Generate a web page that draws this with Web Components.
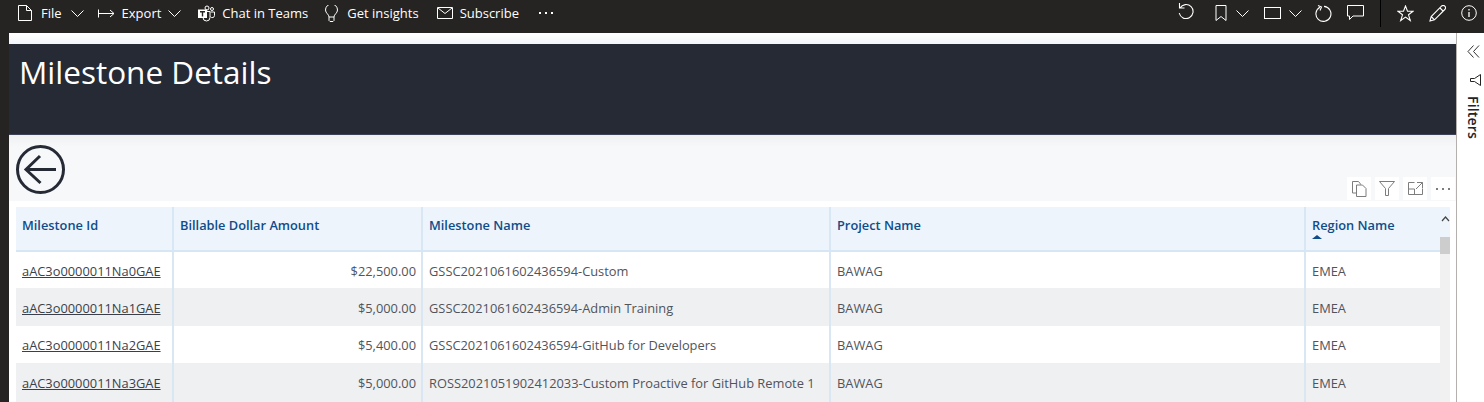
<!DOCTYPE html>
<html>
<head>
<meta charset="utf-8">
<style>
  html, body { margin: 0; height: 100%; overflow: hidden; background: #252423; }
  body { font-family: "Open Sans", "Liberation Sans", sans-serif; }
  report-app { height: 402px; }
</style>
</head>
<body>
<report-app>
  <tool-bar slot="bar"></tool-bar>
  <report-page slot="page"></report-page>
  <filter-pane slot="filters"></filter-pane>
</report-app>

<script>
const dots = (fill) => `<svg width="16" height="2" viewBox="0 0 16 2"><path d="M1 0h2v2H1zM7 0h2v2H7zM13 0h2v2h-2z" fill="${fill}"/></svg>`;

const ICONS = {
  file: '<svg width="14" height="16" viewBox="0 0 14 16"><path d="M.5.500h8l5 5v10H.500zM8.500.500v5h5" fill="none" stroke="#fff"/></svg>',
  exportArrow: '<svg width="17" height="11" viewBox="0 0 17 11"><path d="M.5 1.500v8M1 5.500h15M12 2l4 3.500L12 9" fill="none" stroke="#fff"/></svg>',
  teams: '<svg width="17" height="17" viewBox="0 0 17 17"><circle cx="9" cy="3" r="2" fill="none" stroke="#fff"/><circle cx="14" cy="4" r="1.500" fill="none" stroke="#fff"/><path d="M5 6.500h7v6a3.300 3.300 0 0 1-7 0z" fill="none" stroke="#fff"/><path d="M12.500 7h4v3.500a2.200 2.200 0 0 1-4 1.200" fill="none" stroke="#fff"/><rect x="0" y="4.500" width="9" height="8.500" fill="#fff"/><path d="M2 6.800h5M4.500 6.800v4.600" stroke="#252423" stroke-width="1.400" fill="none"/></svg>',
  bulb: '<svg width="13" height="17" viewBox="0 0 13 17"><path d="M4 12c0-2.700-3.500-3.800-3.500-7a6 6 0 0 1 12 0c0 3.200-3.500 4.300-3.500 7zM4 12v3.500l1 1h3l1-1V12" fill="none" stroke="#fff"/></svg>',
  mail: '<svg width="16" height="12" viewBox="0 0 16 12"><path d="M.5.500h15v11H.500zM1 1l7 5.500L15 1" fill="none" stroke="#fff"/></svg>',
  chevron: '<svg width="13" height="7" viewBox="0 0 13 7"><path d="M.5.500l6 6 6-6" fill="none" stroke="#fff"/></svg>',
  undo: '<svg width="17" height="17" viewBox="0 0 17 17"><path d="M1.500 1v5h5M2 6a7 7 0 1 1-.8 5" fill="none" stroke="#fff" stroke-width="1.100"/></svg>',
  bookmark: '<svg width="12" height="16" viewBox="0 0 12 16"><path d="M1 .500h10v15l-5-4-5 4z" fill="none" stroke="#fff"/></svg>',
  rect: '<svg width="17" height="12" viewBox="0 0 17 12"><rect x=".5" y=".5" width="16" height="11" fill="none" stroke="#fff"/></svg>',
  reload: '<svg width="17" height="17" viewBox="0 0 17 17"><path d="M5 2.200a7.500 7.500 0 1 0 4-.8M3 .5l3.500 1.500L5 5.500" fill="none" stroke="#fff" stroke-width="1.100"/></svg>',
  comment: '<svg width="17" height="16" viewBox="0 0 17 16"><path d="M.5.500h16v10.500H6l-3.500 3.500v-3.500h-2z" fill="none" stroke="#fff"/></svg>',
  star: '<svg width="17" height="17" viewBox="0 0 17 17"><path d="M8.500 1l2 5.300h5.500l-4.500 3.500 1.800 5.700-4.800-3.400-4.800 3.400 1.800-5.700L1 6.300h5.500z" fill="none" stroke="#fff" stroke-width="1.100"/></svg>',
  pencil: '<svg width="17" height="17" viewBox="0 0 17 17"><path d="M1 16l1.200-4.500L12.500 1.200a2 2 0 0 1 3.300 3.300L5.500 14.800zM2.200 11.500l3.300 3.300M11 3l3 3" fill="none" stroke="#fff" stroke-width="1.100"/></svg>',
  info: '<svg width="16" height="16" viewBox="0 0 16 16"><circle cx="8" cy="8" r="7.300" fill="none" stroke="#fff"/><path d="M8 7v5M8 4v1.500" stroke="#fff" stroke-width="1.300" fill="none"/></svg>',
  copy: '<svg width="15" height="16" viewBox="0 0 15 16"><path d="M.5.500h6l2 2.500v.5M.5.500v11.500h4M4.500 4h6l3.500 3.500v8h-9.500z" fill="none" stroke="#7d7d7d"/></svg>',
  funnel: '<svg width="16" height="15" viewBox="0 0 16 15"><path d="M.5.500h15L9.500 7.500v7h-3v-7z" fill="none" stroke="#7d7d7d"/></svg>',
  expand: '<svg width="15" height="13" viewBox="0 0 15 13"><path d="M6.500.5H.5v12h14v-6M.5 7h6v5.500M9 .5h5.500V6M14.500.5L8 7" fill="none" stroke="#7d7d7d"/></svg>',
  back: '<svg width="49" height="49" viewBox="0 0 49 49"><circle cx="24.500" cy="24.500" r="23" fill="none" stroke="#252a35" stroke-width="3"/><path d="M40 24.500H10M24 11L10 24.500 24.500 38" fill="none" stroke="#252a35" stroke-width="3"/></svg>',
  collapse: '<svg width="13" height="13" viewBox="0 0 13 13"><path d="M6.500.5L1 6.500l5.500 6M12 .5L6.500 6.500l5.500 6" fill="none" stroke="#333"/></svg>',
  filterSide: '<svg width="11" height="12" viewBox="0 0 11 12"><path d="M10.500.5v11L4.500 7.500H.5v-3h4z" fill="none" stroke="#252423"/></svg>'
};

class ReportApp extends HTMLElement {
  connectedCallback() {
    this.attachShadow({ mode: 'open' });
    this.shadowRoot.innerHTML = `
      <style>
        :host { display: grid; grid-template: 33px 369px / 9px 1447px 28px; }
        .bar { grid-column: 1 / -1; }
        .page { grid-column: 2; grid-row: 2; min-width: 0; }
        .filters { grid-column: 3; grid-row: 2; }
      </style>
      <div class="bar"><slot name="bar"></slot></div>
      <div class="page"><slot name="page"></slot></div>
      <div class="filters"><slot name="filters"></slot></div>
    `;
  }
}

class ToolItem extends HTMLElement {
  connectedCallback() {
    this.attachShadow({ mode: 'open' });
    const icon = this.getAttribute('icon');
    this.shadowRoot.innerHTML = `
      <style>
        :host { display: inline-flex; align-items: center; gap: var(--gap, 7px); color: #fff; font-size: 13px; white-space: nowrap; }
        span, svg { display: block; }
      </style>
      ${ICONS[icon]}
      <span><slot></slot></span>
      ${this.hasAttribute('menu') ? ICONS.chevron : ''}
    `;
  }
}

class ToolBar extends HTMLElement {
  connectedCallback() {
    this.attachShadow({ mode: 'open' });
    this.shadowRoot.innerHTML = `
      <style>
        :host { display: flex; height: 33px; align-items: center; justify-content: space-between; background: #252423; padding: 0 7px 7px 18px; box-sizing: border-box; }
        .left, .right { display: flex; align-items: center; }
        .left { gap: 15px; }
        .right { gap: 15px; }
        .sep { width: 1px; height: 27px; background: #000; margin: 0 1px; align-self: flex-start; }
        .pair { display: flex; align-items: center; gap: 8px; }
        .mark { gap: 9px; }
        .view { margin-right: -2px; }
        .first { margin-right: 5px; }
        .wide { --gap: 9px; }
        .file { margin-right: -1px; }
        .teams { margin-left: 2px; }
        .bulb { margin-left: 2px; }
        .mail { margin-left: 3px; }
        .more { margin-left: 4px; }
        .more svg { display: block; }
      </style>
      <div class="left">
        <tool-item class="wide file" icon="file" menu>File</tool-item>
        <tool-item icon="exportArrow" menu>Export</tool-item>
        <tool-item class="teams" icon="teams">Chat in Teams</tool-item>
        <tool-item class="wide bulb" icon="bulb">Get insights</tool-item>
        <tool-item class="mail" icon="mail">Subscribe</tool-item>
        <div class="more">${dots('#fff')}</div>
      </div>
      <div class="right">
        <div class="first">${ICONS.undo}</div>
        <div class="pair mark">${ICONS.bookmark}${ICONS.chevron}</div>
        <div class="pair view">${ICONS.rect}${ICONS.chevron}</div>
        ${ICONS.reload}
        ${ICONS.comment}
        <div class="sep"></div>
        ${ICONS.star}
        ${ICONS.pencil}
        ${ICONS.info}
      </div>
    `;
  }
}

class ReportPage extends HTMLElement {
  connectedCallback() {
    this.attachShadow({ mode: 'open' });
    this.shadowRoot.innerHTML = `
      <style>
        :host { display: block; height: 369px; overflow: hidden; }
        .top { height: 11px; background: linear-gradient(#fff, #f4f5f8); }
        header { height: 91px; background: #252a35; border-bottom: 1px solid #3c4258; color: #fff; font-size: 31.500px; line-height: 44px; padding: 6px 0 0 10px; box-sizing: border-box; }
        .tools { height: 66px; padding: 10px 0 0 7px; box-sizing: border-box; display: flex; justify-content: space-between; background: linear-gradient(#eff0f2, #f7f8fa 12px); }
        .back { height: 49px; }
        .body { background: #fff; padding: 6px 6px 0 7px; }
      </style>
      <div class="top"></div>
      <header>Milestone Details</header>
      <div class="tools">
        <div class="back">${ICONS.back}</div>
        <visual-actions></visual-actions>
      </div>
      <div class="body"><milestone-table></milestone-table></div>
    `;
  }
}

class VisualActions extends HTMLElement {
  connectedCallback() {
    this.attachShadow({ mode: 'open' });
    this.shadowRoot.innerHTML = `
      <style>
        :host { display: flex; align-self: flex-end; gap: 4px; margin: 0 1px 1px 0; }
        div { width: 24px; height: 23px; background: #fff; display: flex; align-items: center; justify-content: center; }
      </style>
      <div>${ICONS.copy}</div>
      <div>${ICONS.funnel}</div>
      <div>${ICONS.expand}</div>
      <div>${dots('#7d7d7d')}</div>
    `;
  }
}

const COLS = ['Milestone Id', 'Billable Dollar Amount', 'Milestone Name', 'Project Name', 'Region Name'];
const ROWS = [
  ['aAC3o0000011Na0GAE', '$22,500.00', 'GSSC2021061602436594-Custom', 'BAWAG', 'EMEA'],
  ['aAC3o0000011Na1GAE', '$5,000.00', 'GSSC2021061602436594-Admin Training', 'BAWAG', 'EMEA'],
  ['aAC3o0000011Na2GAE', '$5,400.00', 'GSSC2021061602436594-GitHub for Developers', 'BAWAG', 'EMEA'],
  ['aAC3o0000011Na3GAE', '$5,000.00', 'ROSS2021051902412033-Custom Proactive for GitHub Remote 1', 'BAWAG', 'EMEA']
];

class MilestoneTable extends HTMLElement {
  connectedCallback() {
    this.attachShadow({ mode: 'open' });
    const head = COLS.map((c, i) => `<div class="th">${c}${i === 4 ? '<i class="sort"></i>' : ''}</div>`).join('');
    const rows = ROWS.map((r, n) => `<div class="row ${n % 2 ? 'alt' : ''} ${n < 2 ? 'low' : ''}" style="height:${[36, 38, 37, 39][n]}px">
        ${r.map((v, i) => `<div class="td ${i === 1 ? 'num' : ''}">${i === 0 ? `<a>${v}</a>` : v}</div>`).join('')}
      </div>`).join('');
    this.shadowRoot.innerHTML = `
      <style>
        :host { display: grid; grid-template-columns: 1424px 10px; font-size: 12.850px; }
        .head, .row { display: grid; grid-template-columns: 158px 249px 408px 475px 134px; }
        .head { height: 45px; background: #edf4fb; border-bottom: 2px solid #d6e6f5; box-sizing: border-box; color: #0f4c8a; font-weight: 600; font-size: 12.800px; }
        .th, .td { border-right: 2px solid #d9e6f3; padding: 0 5px 0 6px; box-sizing: border-box; display: flex; align-items: center; white-space: nowrap; }
        .th:last-child, .td:last-child { border-right: 0; }
        .td { color: #50545c; }
        .low .td { padding-top: 2px; }
        .th { position: relative; padding-bottom: 8px; }
        .alt { background: #eff0f2; }
        .num { justify-content: flex-end; }
        a { color: #3a3f4a; text-decoration: underline; }
        .sort { position: absolute; left: 6px; top: 28px; border: 5px solid transparent; border-top: 0; border-bottom: 4px solid #0f4c8a; }
        .scroll { background: #f1f1f1; }
        .scroll .cap { height: 30px; background: #edf4fb; }
        .scroll svg { display: block; margin: 0 auto; padding-top: 9px; }
        .thumb { height: 17px; background: #cdcdcd; }
      </style>
      <div>
        <div class="head">${head}</div>
        ${rows}
      </div>
      <div class="scroll">
        <div class="cap"><svg width="9" height="6" viewBox="0 0 9 6"><path d="M1 5l3.500-4L8 5" fill="none" stroke="#444" stroke-width="1.200"/></svg></div>
        <div class="thumb"></div>
      </div>
    `;
  }
}

class FilterPane extends HTMLElement {
  connectedCallback() {
    this.attachShadow({ mode: 'open' });
    this.shadowRoot.innerHTML = `
      <style>
        :host { display: block; height: 369px; background: #fff; border-left: 1px solid #b3b0ad; box-sizing: border-box; padding: 12px 0 0 10px; }
        svg { display: block; }
        .icon { margin: 16px 0 10px 3px; }
        .label { writing-mode: vertical-rl; font-size: 14px; font-weight: 600; color: #252423; line-height: 14px; letter-spacing: .2px; margin-left: -1px; }
      </style>
      ${ICONS.collapse}
      <div class="icon">${ICONS.filterSide}</div>
      <div class="label">Filters</div>
    `;
  }
}

customElements.define('report-app', ReportApp);
customElements.define('tool-item', ToolItem);
customElements.define('tool-bar', ToolBar);
customElements.define('report-page', ReportPage);
customElements.define('visual-actions', VisualActions);
customElements.define('milestone-table', MilestoneTable);
customElements.define('filter-pane', FilterPane);
</script>
</body>
</html>
